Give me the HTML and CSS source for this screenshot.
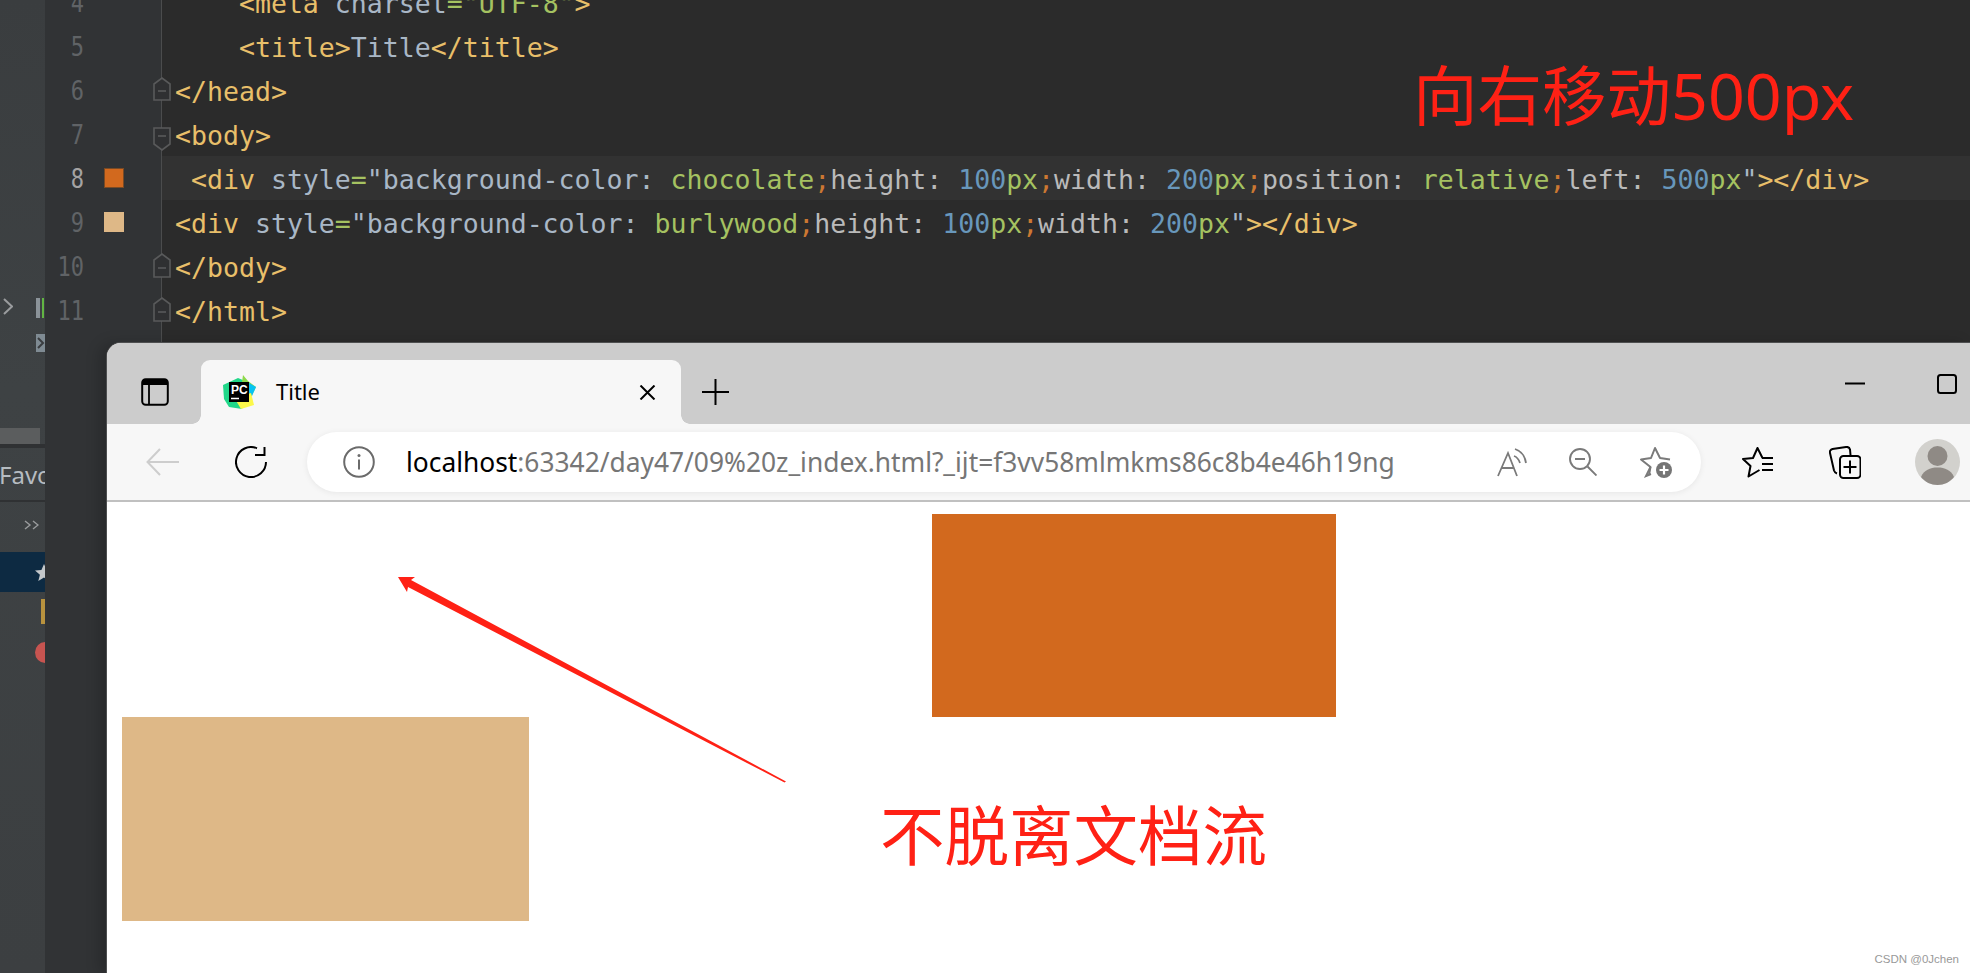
FILE: index.html
```html
<!DOCTYPE html>
<html lang="zh">
<head>
<meta charset="utf-8">
<title>Title</title>
<link rel="stylesheet" href="styles.css">
</head>
<body>
<div class="app">
  <aside class="side">
    <div class="tool-row">
      <svg class="chev" width="10" height="17" viewBox="0 0 10 17"><path d="M1 1l8 7.5-8 7.5" fill="none" stroke="#9a9c9e" stroke-width="2"/></svg>
      <span class="bar-grey"></span><span class="bar-green"></span>
    </div>
    <div class="tool-icon"><svg width="9" height="18" viewBox="0 0 9 18"><path d="M2 4l5 5-5 5" fill="none" stroke="#3a3d40" stroke-width="2"/></svg></div>
    <div class="grey-bar"></div>
    <div class="sep"></div>
    <div class="fav">Favorites</div>
    <div class="sep thin"></div>
    <div class="more"><svg width="15" height="10" viewBox="0 0 15 10"><path d="M1 1l5 4-5 4M9 1l5 4-5 4" fill="none" stroke="#9a9c9e" stroke-width="1.4"/></svg></div>
    <div class="sel"><svg width="20" height="20" viewBox="0 0 20 20"><path d="M10 1l2.6 6 6.4.5-4.9 4.2 1.6 6.3L10 14.6 4.3 18l1.6-6.3L1 7.500l6.400-.5z" fill="#c3c7ca"/></svg></div>
    <div class="folder"></div>
    <div class="dot"></div>
  </aside>

  <main class="editor">
    <div class="row"><div class="gut"><span class="num">4</span></div><code class="code">    <i class="t">&lt;meta</i> <i class="a">charset</i><i class="s">="UTF-8"</i><i class="t">&gt;</i></code></div>
    <div class="row"><div class="gut"><span class="num">5</span></div><code class="code">    <i class="t">&lt;title&gt;</i><i class="p">Title</i><i class="t">&lt;/title&gt;</i></code></div>
    <div class="row"><div class="gut"><span class="num">6</span><svg class="fold" width="18" height="44" viewBox="0 0 18 44"><path d="M1 32V16l8-6 8 6v16z" fill="#2f3032" stroke="#595a5b" stroke-width="1.600"/><path d="M5 23h8" stroke="#595a5b" stroke-width="1.600"/></svg></div><code class="code"><i class="t">&lt;/head&gt;</i></code></div>
    <div class="row"><div class="gut"><span class="num">7</span><svg class="fold" width="18" height="44" viewBox="0 0 18 44"><path d="M1 16v16l8 6 8-6V16z" fill="#2f3032" stroke="#595a5b" stroke-width="1.600"/><path d="M5 24h8" stroke="#595a5b" stroke-width="1.600"/></svg></div><code class="code"><i class="t">&lt;body&gt;</i></code></div>
    <div class="row"><div class="gut"><span class="num cur">8</span><span class="swatch choc"></span></div><code class="code hl"> <i class="t">&lt;div</i> <i class="a">style</i><i class="g">=</i><i class="a">"background-color:</i> <i class="g">chocolate</i><i class="o">;</i><i class="k">height:</i> <i class="b">100</i><i class="g">px</i><i class="o">;</i><i class="k">width:</i> <i class="b">200</i><i class="g">px</i><i class="o">;</i><i class="k">position:</i> <i class="g">relative</i><i class="o">;</i><i class="k">left:</i> <i class="b">500</i><i class="g">px</i><i class="a">"</i><i class="t">&gt;&lt;/div&gt;</i></code></div>
    <div class="row"><div class="gut"><span class="num">9</span><span class="swatch burly"></span></div><code class="code"><i class="t">&lt;div</i> <i class="a">style</i><i class="g">=</i><i class="a">"background-color:</i> <i class="g">burlywood</i><i class="o">;</i><i class="k">height:</i> <i class="b">100</i><i class="g">px</i><i class="o">;</i><i class="k">width:</i> <i class="b">200</i><i class="g">px</i><i class="a">"</i><i class="t">&gt;&lt;/div&gt;</i></code></div>
    <div class="row"><div class="gut"><span class="num">10</span><svg class="fold" width="18" height="44" viewBox="0 0 18 44"><path d="M1 33V16l8-6 8 6v17z" fill="#2f3032" stroke="#595a5b" stroke-width="1.600"/><path d="M5 24h8" stroke="#595a5b" stroke-width="1.600"/></svg></div><code class="code"><i class="t">&lt;/body&gt;</i></code></div>
    <div class="row"><div class="gut"><span class="num">11</span><svg class="fold" width="18" height="44" viewBox="0 0 18 44"><path d="M1 33V16l8-6 8 6v17z" fill="#2f3032" stroke="#595a5b" stroke-width="1.600"/><path d="M5 24h8" stroke="#595a5b" stroke-width="1.600"/></svg></div><code class="code"><i class="t">&lt;/html&gt;</i></code></div>
    <div class="row rest"><div class="gut"></div></div>
  </main>

  <section class="browser">
    <header class="strip">
      <svg class="ic-panel" width="28" height="28" viewBox="0 0 28 28"><rect x="1.200" y="1.200" width="25.600" height="25.600" rx="3.500" fill="none" stroke="#000" stroke-width="2"/><path d="M1 5a4 4 0 0 1 4-4h18a4 4 0 0 1 4 4v2H1z" fill="#000"/><path d="M8 7v20" stroke="#000" stroke-width="1.800"/></svg>
      <div class="tab">
        <svg class="favicon" width="33" height="34" viewBox="0 0 33 34">
          <path d="M0 10L15 3l12 5-8 26-13-2-5-8z" fill="#21d789"/>
          <path d="M20 0l5 6 8 6-5 10-10-8z" fill="#8fd94a"/>
          <path d="M26 8l7 4-4 9-5-5z" fill="#07c3f2"/>
          <path d="M12 24l16-6 3 12-13 4z" fill="#fcf84a"/>
          <rect x="6" y="7" width="20" height="20" fill="#000"/>
          <text class="pc" x="8" y="18.500">PC</text>
          <path d="M8 23.500h8" stroke="#fff" stroke-width="1.500"/>
        </svg>
        <span class="tab-title">Title</span>
        <svg class="close" width="17" height="15" viewBox="0 0 17 15"><path d="M1.500 .5l14 14M15.500 .5l-14 14" stroke="#000" stroke-width="2"/></svg>
      </div>
      <svg class="plus" width="29" height="28" viewBox="0 0 29 28"><path d="M14.500 1v26M1 14h27" stroke="#000" stroke-width="2"/></svg>
      <svg class="min" width="20" height="20" viewBox="0 0 20 20"><path d="M0 9.500h20" stroke="#000" stroke-width="2"/></svg>
      <svg class="max" width="20" height="20" viewBox="0 0 20 20"><rect x="1" y="1" width="18" height="18" rx="2.500" fill="none" stroke="#000" stroke-width="2"/></svg>
    </header>
    <nav class="toolbar">
      <svg class="back" width="33" height="28" viewBox="0 0 33 28"><path d="M14 1L1.500 14 14 27M1.500 14H33" fill="none" stroke="#cdcdcd" stroke-width="2"/></svg>
      <svg class="reload" width="32" height="32" viewBox="0 0 32 32"><path d="M22 2.300A15 15 0 1 0 31 16" fill="none" stroke="#000" stroke-width="2"/><path d="M29.500 1v8H20" fill="none" stroke="#000" stroke-width="2"/></svg>
      <div class="address">
        <svg class="info" width="32" height="32" viewBox="0 0 32 32"><circle cx="16" cy="16" r="14.800" fill="none" stroke="#6b6b6b" stroke-width="2"/><path d="M16 13.500v10" stroke="#6b6b6b" stroke-width="2"/><circle cx="16" cy="9.500" r="1.500" fill="#6b6b6b"/></svg>
        <span class="url"><b class="host">localhost</b>:63342/day47/09%20z_index.html?_ijt=f3vv58mlmkms86c8b4e46h19ng</span>
        <svg class="read" width="31" height="29" viewBox="0 0 31 29"><path d="M1 28L11 5l9 23M4.500 20h13" fill="none" stroke="#7a7a7a" stroke-width="1.800"/><path d="M18 1c6 2 10 7 11 14M17 8c3 1 5 4 6 7" fill="none" stroke="#7a7a7a" stroke-width="1.800"/></svg>
        <svg class="zoomout" width="28" height="28" viewBox="0 0 28 28"><circle cx="11" cy="11" r="10" fill="none" stroke="#7a7a7a" stroke-width="1.900"/><path d="M6 11h10M18.500 18.500l9 9" stroke="#7a7a7a" stroke-width="1.900"/></svg>
        <svg class="staradd" width="34" height="32" viewBox="0 0 34 32"><path d="M10 29l1.500-8L2 13.500l10-1.500L16 2l5 10 10 1.500" fill="none" stroke="#7a7a7a" stroke-width="2" stroke-linejoin="round"/><path d="M11.500 21L7 30l5-2" fill="none" stroke="#7a7a7a" stroke-width="2"/><circle cx="25" cy="24" r="8" fill="#757575"/><path d="M25 19.500v9M20.500 24h9" stroke="#fff" stroke-width="2.200"/></svg>
      </div>
      <svg class="favs" width="32" height="31" viewBox="0 0 32 31"><path d="M17.500 23l-11 6.500L8.500 19 1 12l10-1L15.500 1l5 10" fill="none" stroke="#000" stroke-width="2" stroke-linejoin="round"/><path d="M20 11h11M20 17h11M20 23h11" stroke="#000" stroke-width="2"/></svg>
      <svg class="colls" width="32" height="33" viewBox="0 0 32 33"><path d="M8 27.500c-1.500-.5-2.500-1.500-3-3L1 7c-.5-2 .5-3.500 2.500-4L17 1c2-.3 3.500.5 4 2.500L21.500 9" fill="none" stroke="#000" stroke-width="2"/><rect x="11" y="10" width="20.500" height="22" rx="3.500" fill="#f7f7f7" stroke="#000" stroke-width="2"/><path d="M21 14.500v13M14.500 21h13" stroke="#000" stroke-width="2"/></svg>
      <svg class="avatar" width="45" height="46" viewBox="0 0 45 46"><ellipse cx="22.500" cy="23" rx="22.500" ry="23" fill="#d2d1cd"/><circle cx="22.500" cy="17" r="10" fill="#8f8a85"/><path d="M6 38c3-7 9-9.500 16.500-9.500S36 31 39 38c-4 5-10 8-16.500 8S10 43 6 38z" fill="#8f8a85"/></svg>
    </nav>
    <div class="page">
      <div class="box chocolate"></div>
      <div class="box burlywood"></div>
    </div>
  </section>

  <svg class="arrow" width="1970" height="973" viewBox="0 0 1970 973"><path d="M398 577l17 0-4 3L786 781.500 784.500 782.500 408 587l-1 5z" fill="#ff2115"/></svg>
  <div class="note note-top">向右移动500px</div>
  <div class="note note-bottom">不脱离文档流</div>
  <div class="mark">CSDN @0Jchen</div>
</div>
</body>
</html>
```
FILE: styles.css
```css
* { box-sizing: border-box; }
html, body { margin: 0; padding: 0; }
body { background: #2b2b2b; overflow: hidden; }
i, b { font-style: normal; font-weight: normal; }

.app { position: relative; display: flex; width: 1970px; height: 973px; overflow: hidden; background: #2b2b2b; }

/* left tool window */
.side { width: 45px; flex: none; height: 973px; overflow: hidden; padding-top: 298px; background: linear-gradient(#3a3d3f, #3e4244 40%, #3c3f41); }
.tool-row { display: flex; height: 20px; }
.chev { margin-left: 3px; }
.bar-grey { width: 4px; height: 20px; margin-left: 23px; background: #8b9399; }
.bar-green { width: 2px; height: 20px; margin-left: 2px; background: #62b543; }
.tool-icon { width: 9px; height: 18px; margin: 16px 0 0 36px; background: #7f8b93; }
.tool-icon svg { display: block; }
.grey-bar { width: 40px; height: 16px; margin-top: 76px; background: #5b5d5e; }
.sep { height: 4px; background: #2f3133; }
.sep.thin { height: 2px; }
.fav { height: 52px; margin-left: -1px; white-space: nowrap; font: 24px/54px "Noto Sans", sans-serif; color: #b6bcc1; }
.more { height: 50px; padding: 18px 0 0 24px; }
.more svg { display: block; }
.sel { height: 40px; padding: 11px 0 0 34px; background: #0d2a42; }
.sel svg { display: block; }
.folder { width: 4px; height: 25px; margin: 7px 0 0 41px; background: #b8923e; }
.dot { width: 21px; height: 21px; margin: 18px 0 0 35px; border-radius: 50%; background: #c75450; }

/* editor */
.editor { flex: 1; min-width: 0; margin-top: -20px; display: flex; flex-direction: column; }
.row { display: flex; height: 44px; flex: none; }
.row.rest { flex: 1; }
.gut { width: 117px; flex: none; display: flex; align-items: center; position: relative; background: #313335; border-right: 1px solid #4b4c4d; }
.num { width: 39px; flex: none; margin-top: 4px; text-align: right; font: 22px/44px "DejaVu Sans Mono", monospace; color: #606366; transform: scaleY(1.2); }
.num.cur { color: #a4a3a3; }
.swatch { width: 20px; height: 20px; margin-left: 20px; flex: none; }
.choc { background: #d2691e; border: 1px solid #7a4a24; }
.burly { background: #deb887; }
.fold { position: absolute; left: 108px; top: 0; }
.code { flex: 1; padding: 2px 0 0 13px; white-space: pre; font: 26.550px/44px "DejaVu Sans Mono", monospace; color: #bababa; }
.hl { background: #323232; }
.t { color: #e8bf6a; }
.a { color: #a9b7c6; }
.s { color: #a5c261; }
.p { color: #a9b7c6; }
.g { color: #a5c261; }
.o { color: #cc7832; }
.k { color: #bababa; }
.b { color: #6897bb; }

/* browser window */
.browser { position: absolute; left: 107px; top: 343px; right: 0; bottom: 0; display: flex; flex-direction: column; border-top-left-radius: 14px; overflow: hidden; background: #fff; box-shadow: 0 0 0 1px #4e4f50, -8px 0 14px rgba(0, 0, 0, .18); }
.strip { height: 81px; flex: none; display: flex; align-items: center; padding-top: 17px; background: #ccc; }
.ic-panel { margin-left: 34px; flex: none; }
.tab { position: relative; align-self: stretch; width: 480px; flex: none; margin-left: 32px; display: flex; align-items: center; border-radius: 9px 9px 0 0; background: #f7f7f7; }
.tab::before, .tab::after { content: ""; position: absolute; bottom: 0; width: 9px; height: 9px; }
.tab::before { left: -9px; background: radial-gradient(circle at 0 0, #ccc 8.500px, #f7f7f7 9px); }
.tab::after { right: -9px; background: radial-gradient(circle at 100% 0, #ccc 8.500px, #f7f7f7 9px); }
.favicon { margin-left: 22px; flex: none; }
.pc { font: bold 12px "Liberation Sans", sans-serif; fill: #fff; }
.tab-title { margin-left: 20px; margin-bottom: 2px; font: 22px "Noto Sans", sans-serif; color: #000; }
.close { margin-left: auto; margin-right: 25px; flex: none; }
.plus { margin-left: 20px; flex: none; }
.min { margin-left: auto; align-self: flex-start; margin-top: 14px; flex: none; }
.max { margin-left: 72px; margin-right: 13px; align-self: flex-start; margin-top: 14px; flex: none; }

.toolbar { height: 76px; flex: none; display: flex; align-items: center; background: #f7f7f7; }
.back { margin-left: 39px; flex: none; }
.reload { margin-left: 56px; flex: none; }
.address { width: 1394px; height: 60px; margin-left: 40px; flex: none; display: flex; align-items: center; border-radius: 30px; background: #fff; box-shadow: 0 1px 6px rgba(0, 0, 0, .07); }
.info { margin-left: 36px; flex: none; }
.url { margin-left: 31px; flex: none; white-space: nowrap; font: 26.350px "Noto Sans", sans-serif; color: #767676; }
.host { color: #000; }
.read { margin-left: auto; flex: none; }
.zoomout { margin-left: 41px; flex: none; }
.staradd { margin-left: 42px; margin-right: 28px; flex: none; }
.favs { margin-left: 41px; flex: none; }
.colls { margin-left: 55px; flex: none; }
.avatar { margin-left: 54px; flex: none; }

.page { flex: 1; min-height: 0; border-top: 2px solid #c0c0c0; padding-top: 12px; background: #fff; }
.box { display: block; }
.chocolate { width: 404px; height: 203px; margin-left: 825px; background: #d2691e; }
.burlywood { width: 407px; height: 204px; margin-left: 15px; background: #deb887; }

/* annotations drawn over the screenshot */
.arrow { position: absolute; left: 0; top: 0; }
.note { position: absolute; font: 64.500px/80px "Noto Sans", "Noto Sans CJK SC", sans-serif; color: #ff2115; white-space: nowrap; }
.note-top { left: 1413px; top: 55px; }
.note-bottom { left: 880px; top: 795px; }
.mark { position: absolute; right: 11px; top: 952px; font: 11.500px/14px "Liberation Sans", sans-serif; color: #999; white-space: nowrap; }
```
